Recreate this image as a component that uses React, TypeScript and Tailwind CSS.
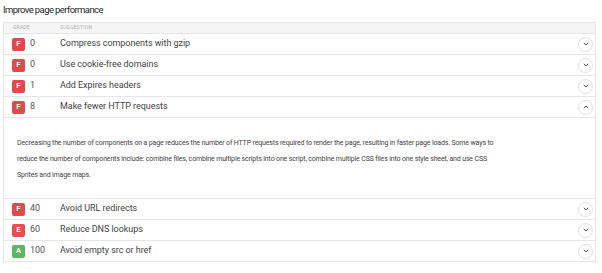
import { ChevronDown, ChevronUp } from "lucide-react";

type Row = { grade: string; score: number; title: string; open?: boolean };

const rows: Row[] = [
  { grade: "F", score: 0, title: "Compress components with gzip" },
  { grade: "F", score: 0, title: "Use cookie-free domains" },
  { grade: "F", score: 1, title: "Add Expires headers" },
  { grade: "F", score: 8, title: "Make fewer HTTP requests", open: true },
  { grade: "F", score: 40, title: "Avoid URL redirects" },
  { grade: "E", score: 60, title: "Reduce DNS lookups" },
  { grade: "A", score: 100, title: "Avoid empty src or href" },
];

const badgeColor: Record<string, string> = {
  F: "bg-[#e3494b]",
  E: "bg-[#e4504f]",
  A: "bg-[#5cb85c]",
};

export default function App() {
  return (
    <div className="bg-white w-[602px] h-[273px] px-[3px] pt-[3px] font-['Roboto',sans-serif] text-[#333]">
      <h2 className="w-fit text-[9.5px] leading-[14px] font-normal tracking-[-0.6px] text-[#1f1f1f] mb-[5px]">
        Improve page performance
      </h2>

      <div className="w-[593px] border border-[#e6e6e6]">
        <div className="flex items-center h-[11px] bg-[#f5f5f5] border-b border-[#e6e6e6] text-[5px] tracking-[0.2px] uppercase text-[#b0b0b0]">
          <span className="w-[56px] pl-[9px]">Grade</span>
          <span>Suggestion</span>
        </div>

        {rows.map((r) => (
          <div key={r.title} className="border-b border-[#e6e6e6] last:border-b-0">
            <div className="flex items-center h-[20px] text-[9px] tracking-[-0.05px]">
              <div className="w-[56px] pl-[8px] flex items-center">
                <span
                  className={`${badgeColor[r.grade]} w-[13px] h-[13px] rounded-[2px] text-white text-[8px] font-semibold tracking-normal flex items-center justify-center`}
                >
                  {r.grade}
                </span>
                <span className="ml-[5px] text-[#555]">{r.score}</span>
              </div>
              <span className="flex-1 text-[#444]">{r.title}</span>
              <span className="mr-[2px] w-[15px] h-[15px] rounded-full border border-[#e0e0e0] flex items-center justify-center text-[#555]">
                {r.open ? <ChevronUp size={8} strokeWidth={3} /> : <ChevronDown size={8} strokeWidth={3} />}
              </span>
            </div>
            {r.open && (
              <div className="border-t border-[#e6e6e6] h-[81px] pl-[13px] pt-[17px]">
                <p className="w-[482px] text-[7px] leading-[16px] tracking-[-0.15px] text-[#444]">
                  Decreasing the number of components on a page reduces the number of HTTP requests required to render
                  the page, resulting in faster page loads. Some ways to reduce the number of components include: combine
                  files, combine multiple scripts into one script, combine multiple CSS files into one style sheet, and use
                  CSS Sprites and image maps.
                </p>
              </div>
            )}
          </div>
        ))}
      </div>
    </div>
  );
}
